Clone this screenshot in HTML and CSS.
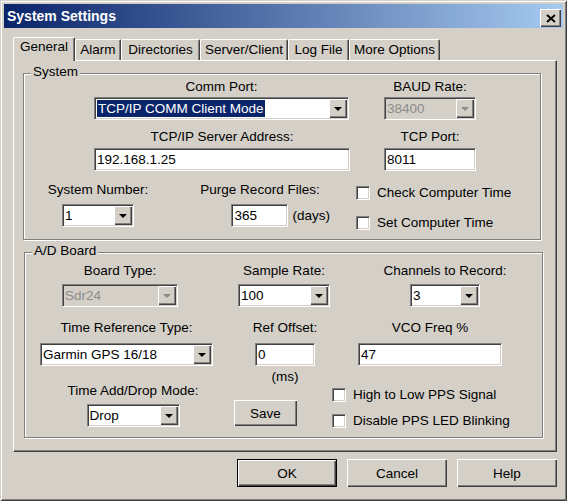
FILE: index.html
```html
<!DOCTYPE html>
<html>
<head>
<meta charset="utf-8">
<title>System Settings</title>
<link rel="stylesheet" href="styles.css">
</head>
<body>
<div class="window">
  <div class="titlebar">
    <span class="title">System Settings</span>
    <span class="close"><svg width="10" height="9" viewBox="0 0 10 9"><path d="M1 1l8 7M9 1L1 8" stroke="#000" stroke-width="2" fill="none"/></svg></span>
  </div>

  <div class="tabs">
    <div class="tab active t1">General</div>
    <div class="tab t2">Alarm</div>
    <div class="tab t3">Directories</div>
    <div class="tab t4">Server/Client</div>
    <div class="tab t5">Log File</div>
    <div class="tab t6">More Options</div>
  </div>

  <div class="panel">
    <section class="group sys">
      <div class="legend">System</div>
      <div class="row r1">
        <div class="field comm">
          <div class="lbl">Comm Port:</div>
          <div class="combo"><span class="val"><span class="sel">TCP/IP COMM Client Mode</span></span><span class="dd"></span></div>
        </div>
        <div class="field baud">
          <div class="lbl">BAUD Rate:</div>
          <div class="combo disabled"><span class="val">38400</span><span class="dd"></span></div>
        </div>
      </div>
      <div class="row r2">
        <div class="field addr">
          <div class="lbl">TCP/IP Server Address:</div>
          <div class="input">192.168.1.25</div>
        </div>
        <div class="field port">
          <div class="lbl">TCP Port:</div>
          <div class="input">8011</div>
        </div>
      </div>
      <div class="row r3">
        <div class="field sysnum">
          <div class="lbl">System Number:</div>
          <div class="combo"><span class="val">1</span><span class="dd"></span></div>
        </div>
        <div class="field purge">
          <div class="lbl">Purge Record Files:</div>
          <div class="unit"><div class="input">365</div><span>(days)</span></div>
        </div>
        <div class="checks sys-checks">
          <div class="check"><span class="cb"></span>Check Computer Time</div>
          <div class="check"><span class="cb"></span>Set Computer Time</div>
        </div>
      </div>
    </section>

    <section class="group ad">
      <div class="legend">A/D Board</div>
      <div class="row a1">
        <div class="field board">
          <div class="lbl">Board Type:</div>
          <div class="combo disabled"><span class="val">Sdr24</span><span class="dd"></span></div>
        </div>
        <div class="field sample">
          <div class="lbl">Sample Rate:</div>
          <div class="combo"><span class="val">100</span><span class="dd"></span></div>
        </div>
        <div class="field chan">
          <div class="lbl">Channels to Record:</div>
          <div class="combo"><span class="val">3</span><span class="dd"></span></div>
        </div>
      </div>
      <div class="row a2">
        <div class="field tref">
          <div class="lbl">Time Reference Type:</div>
          <div class="combo"><span class="val">Garmin GPS 16/18</span><span class="dd"></span></div>
        </div>
        <div class="field refoff">
          <div class="lbl">Ref Offset:</div>
          <div class="input">0</div>
          <div class="ms">(ms)</div>
        </div>
        <div class="field vco">
          <div class="lbl">VCO Freq %</div>
          <div class="input">47</div>
        </div>
      </div>
      <div class="row a3">
        <div class="field adddrop">
          <div class="lbl">Time Add/Drop Mode:</div>
          <div class="combo"><span class="val">Drop</span><span class="dd"></span></div>
        </div>
        <div class="btn save">Save</div>
        <div class="checks ad-checks">
          <div class="check"><span class="cb"></span>High to Low PPS Signal</div>
          <div class="check"><span class="cb"></span>Disable PPS LED Blinking</div>
        </div>
      </div>
    </section>
  </div>

  <div class="buttons">
    <div class="btn default">OK</div>
    <div class="btn">Cancel</div>
    <div class="btn">Help</div>
  </div>
</div>
</body>
</html>
```

FILE: styles.css
```css
* { box-sizing: border-box; }

body {
  margin: 0;
  background: #D4D0C8;
  font-family: "Liberation Sans", Arial, sans-serif;
  font-size: 13.5px;
  color: #000;
}

.window {
  width: 567px;
  height: 501px;
  padding: 4px;
  background: #D4D0C8;
  box-shadow: inset 1px 1px 0 #D4D0C8, inset -1px -1px 0 #404040,
              inset 2px 2px 0 #fff, inset -2px -2px 0 #808080;
}

/* title bar */
.titlebar {
  height: 24px;
  display: flex;
  align-items: center;
  justify-content: space-between;
  padding: 0 2px 0 3px;
  background: linear-gradient(to right, #0A246A, #A6CAF0);
}
.title {
  color: #fff;
  font-weight: bold;
  font-size: 14px;
  line-height: 16px;
}
.close {
  align-self: flex-start;
  margin-top: 5px;
  width: 21px;
  height: 18px;
  background: #D4D0C8;
  display: flex;
  align-items: center;
  justify-content: center;
  box-shadow: inset 1px 1px 0 #fff, inset -1px -1px 0 #404040, inset -2px -2px 0 #808080;
}

/* tabs */
.tabs {
  position: relative;
  z-index: 1;
  display: flex;
  align-items: flex-end;
  height: 23px;
  margin: 9px 0 0 9px;
}
.tab {
  height: 21px;
  padding-top: 2px;
  line-height: 16px;
  text-align: center;
  background: #D4D0C8;
  border-left: 1px solid #fff;
  border-top: 1px solid #fff;
  border-right: 1px solid #404040;
  border-radius: 2px 2px 0 0;
  box-shadow: inset -1px 0 0 #808080;
}
.tab.active {
  height: 24px;
  margin-bottom: -1px;
  padding-top: 1px;
}
.t1 { width: 62px; }
.t2 { width: 46px; }
.t3 { width: 79px; }
.t4 { width: 88px; }
.t5 { width: 61px; }
.t6 { width: 91px; }

/* panel */
.panel {
  width: 544px;
  height: 392px;
  margin-left: 9px;
  padding-left: 9px;
  border-left: 1px solid #fff;
  border-top: 1px solid #fff;
  border-right: 1px solid #404040;
  border-bottom: 1px solid #404040;
  box-shadow: inset -1px -1px 0 #808080;
}

/* group boxes */
.group {
  border: 1px solid #808080;
  box-shadow: inset 1px 1px 0 #fff, 1px 1px 0 #fff;
  display: flex;
  flex-direction: column;
}
.sys { width: 518px; height: 167px; margin-top: 12px; }
.ad  { width: 519px; height: 186px; margin-top: 12px; margin-left: 1px; }

.legend {
  width: max-content;
  margin: -10px 0 0 7px;
  padding: 0 2px;
  line-height: 16px;
  background: #D4D0C8;
}

.row { display: flex; align-items: flex-start; }
.field { display: flex; flex-direction: column; align-items: center; flex: none; }
.lbl { line-height: 16px; white-space: nowrap; }

.r1 { margin-top: -1px; }  .r1 .lbl { margin-bottom: 2px; }
.r2 { margin-top: 9px; }   .r2 .lbl { margin-bottom: 3px; }
.r3 { margin-top: 11px; }  .r3 .lbl { margin-bottom: 6px; }
.a1 { margin-top: 4px; }   .a1 .lbl { margin-bottom: 5px; }
.a2 { margin-top: 13px; }  .a2 .lbl { margin-bottom: 7px; }
.a3 { margin-top: -2px; }  .a3 .lbl { margin-bottom: 5px; }

/* sunken controls */
.combo, .input {
  height: 23px;
  padding: 1px;
  background: #fff;
  border: 1px solid;
  border-color: #808080 #fff #fff #808080;
  box-shadow: inset 1px 1px 0 #404040, inset -1px -1px 0 #D4D0C8;
  display: flex;
  align-items: center;
  white-space: nowrap;
  line-height: 17px;
}
.input { padding-left: 2px; }
.val { flex: 1; padding-left: 1px; overflow: hidden; }
.sel {
  display: inline-block;
  padding: 0 1px;
  background: #0A246A;
  color: #fff;
  line-height: 17px;
}
.dd {
  flex: none;
  width: 18px;
  height: 19px;
  background: #D4D0C8;
  display: flex;
  align-items: center;
  justify-content: center;
  box-shadow: inset 1px 1px 0 #fff, inset -1px -1px 0 #404040, inset -2px -2px 0 #808080;
}
.dd::after {
  content: "";
  width: 0;
  height: 0;
  margin-top: 1px;
  border-left: 4px solid transparent;
  border-right: 4px solid transparent;
  border-top: 4px solid #000;
}
.combo.disabled { background: #D4D0C8; }
.combo.disabled .val { color: #8c8c8c; }
.combo.disabled .dd::after { border-top-color: #8c8c8c; }

/* field geometry */
.comm { margin-left: 70px; }   .comm .combo { width: 255px; }
.baud { margin-left: 35px; }   .baud .combo { width: 92px; }
.addr { margin-left: 70px; }   .addr .input { width: 256px; }
.port { margin-left: 34px; }   .port .input { width: 92px; }
.sysnum { margin-left: 14px; width: 120px; }  .sysnum .combo { width: 72px; }
.purge { margin-left: 32px; width: 140px; }
.unit { align-self: flex-end; display: flex; align-items: center; gap: 4px; }
.purge .input { width: 57px; }

.board { margin-left: 37px; }  .board .combo { width: 116px; }
.sample { margin-left: 60px; } .sample .combo { width: 92px; }
.chan { margin-left: 53px; width: 124px; } .chan .combo { width: 70px; }
.tref { margin-left: 15px; }   .tref .combo { width: 173px; }
.refoff { margin-left: 32px; width: 80px; } .refoff .input { width: 60px; }
.ms { margin-top: 3px; line-height: 16px; }
.vco { margin-left: 33px; }    .vco .input { width: 144px; }
.adddrop { margin-left: 38px; width: 140px; } .adddrop .combo { width: 93px; }

/* checkboxes */
.checks { display: flex; flex-direction: column; flex: none; }
.sys-checks { margin-left: 26px; margin-top: 3px; gap: 14px; }
.ad-checks { margin-left: 35px; margin-top: 4px; gap: 10px; }
.check { display: flex; align-items: center; line-height: 16px; white-space: nowrap; }
.cb {
  width: 14px;
  height: 14px;
  margin-right: 7px;
  background: #fff;
  border: 1px solid;
  border-color: #808080 #fff #fff #808080;
  box-shadow: inset 1px 1px 0 #404040, inset -1px -1px 0 #D4D0C8;
}

/* buttons */
.btn {
  display: flex;
  align-items: center;
  justify-content: center;
  background: #D4D0C8;
  box-shadow: inset 1px 1px 0 #fff, inset -1px -1px 0 #404040, inset -2px -2px 0 #808080;
}
.save { margin-left: 31px; margin-top: 17px; width: 63px; height: 26px; flex: none; }

.buttons {
  display: flex;
  justify-content: flex-end;
  gap: 10px;
  width: 553px;
  margin-top: 7px;
}
.buttons .btn { width: 100px; height: 28px; }
.btn.default {
  border: 1px solid #000;
}
```
